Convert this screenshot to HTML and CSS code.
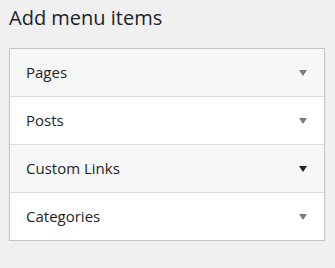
FILE: index.html
```html
<!DOCTYPE html>
<html>
<head>
<meta charset="utf-8">
<link rel="stylesheet" href="styles.css">
</head>
<body>
<div class="wrap">
  <h2 class="title">Add menu items</h2>
  <div class="accordion">
    <div class="section alt">
      <span class="label">Pages</span>
      <span class="arrow"></span>
    </div>
    <div class="section">
      <span class="label">Posts</span>
      <span class="arrow"></span>
    </div>
    <div class="section alt">
      <span class="label">Custom Links</span>
      <span class="arrow dark"></span>
    </div>
    <div class="section">
      <span class="label">Categories</span>
      <span class="arrow"></span>
    </div>
  </div>
</div>
</body>
</html>
```

FILE: styles.css
```css
html, body {
  margin: 0;
  padding: 0;
  background: #f0f0f1;
}
body {
  font-family: "Open Sans", "Noto Sans", sans-serif;
  color: #1d2327;
}
.wrap {
  padding: 5px 10px 0 9px;
  width: 316px;
}
.title {
  margin: 0 0 17px;
  font-size: 20px;
  line-height: 26px;
  font-weight: 400;
}
.accordion {
  background: #fff;
  border: 1px solid #c3c4c7;
  box-shadow: 0 1px 1px rgba(0, 0, 0, 0.08);
}
.section {
  height: 47px;
  display: flex;
  align-items: center;
  justify-content: space-between;
  padding: 0 17px 0 16px;
  border-top: 1px solid #dcdcde;
  background: #fff;
}
.section:first-child {
  border-top: none;
}
.section.alt {
  background: #f6f7f7;
}
.label {
  font-size: 15px;
  line-height: 20px;
  padding-bottom: 2px;
}
.arrow {
  width: 0;
  height: 0;
  border-left: 4px solid transparent;
  border-right: 4px solid transparent;
  border-top: 6px solid #787c82;
}
.arrow.dark {
  border-top-color: #1d2327;
}
```
